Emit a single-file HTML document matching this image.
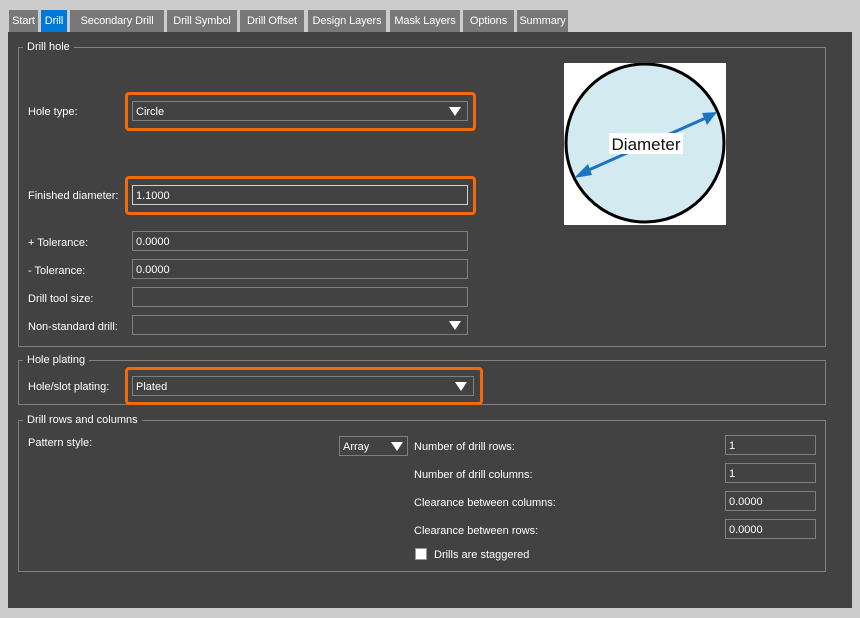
<!DOCTYPE html>
<html><head><style>
*{margin:0;padding:0;box-sizing:border-box}
body{width:860px;height:618px;background:#cccccc;position:relative;overflow:hidden;font-family:"Liberation Sans",sans-serif;font-size:11px;color:#fff}
.a{position:absolute}
.tab{position:absolute;top:10px;height:22px;background:#787878;color:#fff;line-height:22px;text-align:center;font-size:11px;letter-spacing:-0.1px}
.panel{position:absolute;left:8px;top:32px;width:844px;height:576px;background:#424242}
.grp{position:absolute;border:1px solid #808080}
.gt{position:absolute;background:#424242;padding:0 4px;left:4px;top:-8px;line-height:14px}
.lbl{position:absolute;line-height:14px}
.f{position:absolute;border:1px solid #7f7f7f;height:20px;line-height:20px;padding-left:3px}
.f.w{border-color:#d0d0d0}
.tri{position:absolute;right:6px;top:5px;width:0;height:0;border-left:6.5px solid transparent;border-right:6.5px solid transparent;border-top:9px solid #fff}
.or{position:absolute;border:3px solid #f26a0e;border-radius:4px}
</style></head><body>
<div class="tab" style="left:9px;width:29px">Start</div>
<div class="tab" style="left:41px;width:26px;background:#0078d7">Drill</div>
<div class="tab" style="left:70px;width:94px">Secondary Drill</div>
<div class="tab" style="left:167px;width:70px">Drill Symbol</div>
<div class="tab" style="left:240px;width:64px">Drill Offset</div>
<div class="tab" style="left:308px;width:78px">Design Layers</div>
<div class="tab" style="left:390px;width:70px">Mask Layers</div>
<div class="tab" style="left:463px;width:51px">Options</div>
<div class="tab" style="left:517px;width:51px">Summary</div>
<div class="panel"></div>

<div class="grp" style="left:18px;top:47px;width:808px;height:300px"><div class="gt">Drill hole</div></div>
<div class="grp" style="left:18px;top:360px;width:808px;height:45px"><div class="gt">Hole plating</div></div>
<div class="grp" style="left:18px;top:420px;width:808px;height:152px"><div class="gt">Drill rows and columns</div></div>

<div class="lbl" style="left:28px;top:105px">Hole type:</div>
<div class="or" style="left:125px;top:92px;width:351px;height:39px"></div>
<div class="f" style="left:132px;top:101px;width:336px">Circle<div class="tri"></div></div>

<div class="lbl" style="left:28px;top:189px">Finished diameter:</div>
<div class="or" style="left:125px;top:176px;width:351px;height:39px"></div>
<div class="f w" style="left:132px;top:185px;width:336px">1.1000</div>

<div class="lbl" style="left:28px;top:236px">+ Tolerance:</div>
<div class="f" style="left:132px;top:231px;width:336px">0.0000</div>
<div class="lbl" style="left:28px;top:264px">- Tolerance:</div>
<div class="f" style="left:132px;top:259px;width:336px">0.0000</div>
<div class="lbl" style="left:28px;top:292px">Drill tool size:</div>
<div class="f" style="left:132px;top:287px;width:336px"></div>
<div class="lbl" style="left:28px;top:320px">Non-standard drill:</div>
<div class="f" style="left:132px;top:315px;width:336px"><div class="tri"></div></div>

<div class="lbl" style="left:28px;top:380px">Hole/slot plating:</div>
<div class="or" style="left:125px;top:367px;width:358px;height:38px"></div>
<div class="f" style="left:132px;top:376px;width:342px">Plated<div class="tri"></div></div>

<div class="lbl" style="left:28px;top:436px">Pattern style:</div>
<div class="f" style="left:339px;top:436px;width:69px">Array<div class="tri" style="right:4px"></div></div>
<div class="lbl" style="left:414px;top:440px">Number of drill rows:</div>
<div class="f" style="left:725px;top:435px;width:91px">1</div>
<div class="lbl" style="left:414px;top:468px">Number of drill columns:</div>
<div class="f" style="left:725px;top:463px;width:91px">1</div>
<div class="lbl" style="left:414px;top:496px">Clearance between columns:</div>
<div class="f" style="left:725px;top:491px;width:91px">0.0000</div>
<div class="lbl" style="left:414px;top:524px">Clearance between rows:</div>
<div class="f" style="left:725px;top:519px;width:91px">0.0000</div>
<div class="a" style="left:415px;top:548px;width:12px;height:12px;background:#fff;border:1px solid #999"></div>
<div class="lbl" style="left:434px;top:548px">Drills are staggered</div>

<svg class="a" style="left:564px;top:63px" width="162" height="162" viewBox="0 0 162 162">
<rect width="162" height="162" fill="#fff"/>
<circle cx="81" cy="80" r="79" fill="#d4eaf1" stroke="#000" stroke-width="3"/>
<line x1="18" y1="110" x2="144" y2="54" stroke="#1a74c2" stroke-width="3"/>
<polygon points="10,115 24,101 28,112" fill="#1a74c2"/>
<polygon points="153,49 138,50 143,62" fill="#1a74c2"/>
<rect x="45" y="70" width="74" height="21" fill="#fff"/>
<text x="82" y="87" text-anchor="middle" font-family="Liberation Sans" font-size="17" fill="#111">Diameter</text>
</svg>
</body></html>
